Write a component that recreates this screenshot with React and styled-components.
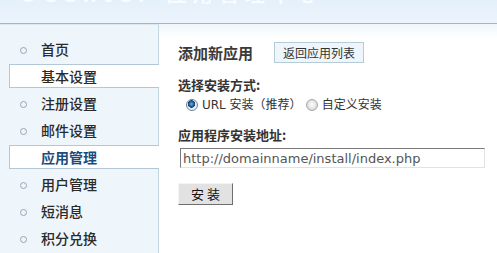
import styled, { createGlobalStyle } from "styled-components";

const Global = createGlobalStyle`
  html, body {
    margin: 0;
    padding: 0;
    background: #ffffff;
  }
  body {
    font-family: "DejaVu Sans", "Noto Sans CJK SC", sans-serif;
    color: #333;
  }
`;

const menu = [
    { name: "首页" },
    { name: "基本设置", hover: true },
    { name: "注册设置" },
    { name: "邮件设置" },
    { name: "应用管理", current: true },
    { name: "用户管理" },
    { name: "短消息" },
    { name: "积分兑换" },
];

function App() {
    return (
        <Pagina>
            <Global />
            <Cabecera>
                <Logo>UCenter 应用管理中心</Logo>
            </Cabecera>
            <Cuerpo>
                <Lateral>
                    {menu.map((m) => (
                        <Item key={m.name} $boxed={m.hover || m.current} $current={m.current}>
                            <Bullet $hidden={m.hover || m.current} />
                            {m.name}
                        </Item>
                    ))}
                </Lateral>
                <Contenido>
                    <FilaTitulo>
                        <Titulo>添加新应用</Titulo>
                        <BotonVolver>返回应用列表</BotonVolver>
                    </FilaTitulo>
                    <Etiqueta>选择安装方式:</Etiqueta>
                    <FilaRadios>
                        <Radio $checked />
                        <RadioTexto>URL 安装（推荐）</RadioTexto>
                        <Radio />
                        <RadioTexto>自定义安装</RadioTexto>
                    </FilaRadios>
                    <Etiqueta $top={14}>应用程序安装地址:</Etiqueta>
                    <Campo defaultValue="http://domainname/install/index.php" />
                    <BotonInstalar>安 装</BotonInstalar>
                </Contenido>
            </Cuerpo>
        </Pagina>
    );
}

const Pagina = styled.div`
    min-height: 100vh;
    display: flex;
    flex-direction: column;
`;

const Cabecera = styled.div`
    height: 23px;
    background: linear-gradient(#e4f0fa, #ecf4fc);
    border-bottom: 1px solid #a2babb;
    overflow: hidden;
`;

const Logo = styled.div`
    margin: -17px 0 0 20px;
    font-size: 20px;
    font-weight: bold;
    line-height: 24px;
    letter-spacing: 6px;
    color: #ffffff;
    opacity: 0.8;
`;

const Cuerpo = styled.div`
    flex: 1;
    display: flex;
`;

const Lateral = styled.div`
    width: 158px;
    background: #eef6fc;
    border-right: 1px solid #c2d6e3;
    border-top: 1px solid #dce9ec;
    padding-top: 12px;
    display: flex;
    flex-direction: column;
    gap: 3px;
    font-family: "Noto Sans CJK SC", sans-serif;
`;

const Item = styled.div`
    height: 22px;
    margin-left: 9px;
    margin-right: -1px;
    display: flex;
    align-items: center;
    font-size: 14px;
    line-height: 22px;
    color: ${(p) => (p.$current ? "#1a4d7e" : "#2a2a2a")};
    font-weight: ${(p) => (p.$current ? "bold" : "500")};
    background: ${(p) => (p.$boxed ? "#ffffff" : "transparent")};
    border: 1px solid ${(p) => (p.$boxed ? "#b3c7d6" : "transparent")};
    border-right: none;
`;

const Bullet = styled.span`
    width: 5px;
    height: 5px;
    border: 1px solid #9aa4ab;
    border-radius: 50%;
    margin: 2px 14px 0 10px;
    visibility: ${(p) => (p.$hidden ? "hidden" : "visible")};
`;

const Contenido = styled.div`
    flex: 1;
    padding: 18px 0 0 19px;
    background: linear-gradient(#eef5fb, #ffffff 14px);
    display: flex;
    flex-direction: column;
    align-items: flex-start;
    font-family: "Noto Sans CJK SC", sans-serif;
`;

const FilaTitulo = styled.div`
    display: flex;
    align-items: center;
    gap: 21px;
`;

const Titulo = styled.div`
    font-size: 15px;
    font-weight: bold;
    color: #3a3a3a;
    line-height: 21px;
`;

const BotonVolver = styled.div`
    height: 19px;
    padding: 0 8px;
    border: 1px solid #b6cbd6;
    background: #eef6fb;
    font-size: 12px;
    line-height: 19px;
    color: #333;
`;

const Etiqueta = styled.div`
    margin-top: ${(p) => p.$top || 14}px;
    font-size: 13px;
    font-weight: bold;
    line-height: 16px;
    color: #333;
`;

const FilaRadios = styled.div`
    margin-top: 4px;
    padding-left: 8px;
    display: flex;
    align-items: center;
    height: 16px;
`;

const Radio = styled.span`
    width: 10px;
    height: 10px;
    border-radius: 50%;
    border: 1px solid ${(p) => (p.$checked ? "#6f8294" : "#a4a8ac")};
    background: ${(p) =>
        p.$checked
            ? "radial-gradient(circle at 45% 40%, #6fb0e0 0, #1d5f9a 2.5px, #0f3f6c 3.5px, #e9eef2 4px)"
            : "radial-gradient(circle at 50% 45%, #ffffff 0, #dcdcdc 5px)"};
    margin-right: 4px;
`;

const RadioTexto = styled.span`
    font-family: "DejaVu Sans", "Noto Sans CJK SC", sans-serif;
    font-size: 12px;
    line-height: 16px;
    color: #333;
    margin-right: 4px;
`;

const Campo = styled.input`
    margin: 5px 0 0 2px;
    width: 305px;
    height: 20px;
    box-sizing: border-box;
    padding: 0 2px;
    border: 1px solid #e2e2e2;
    border-top-color: #7a7a7a;
    border-left-color: #7a7a7a;
    font-family: "DejaVu Sans", sans-serif;
    font-size: 13px;
    color: #555;
    outline: none;
`;

const BotonInstalar = styled.button`
    margin-top: 15px;
    width: 55px;
    height: 22px;
    padding: 0;
    background: #e2e2e2;
    border: 1px solid #f4f4f4;
    border-right-color: #6e6e6e;
    border-bottom-color: #6e6e6e;
    font-family: "Noto Sans CJK SC", sans-serif;
    font-size: 13px;
    line-height: 20px;
    color: #111;
`;

export default App;
